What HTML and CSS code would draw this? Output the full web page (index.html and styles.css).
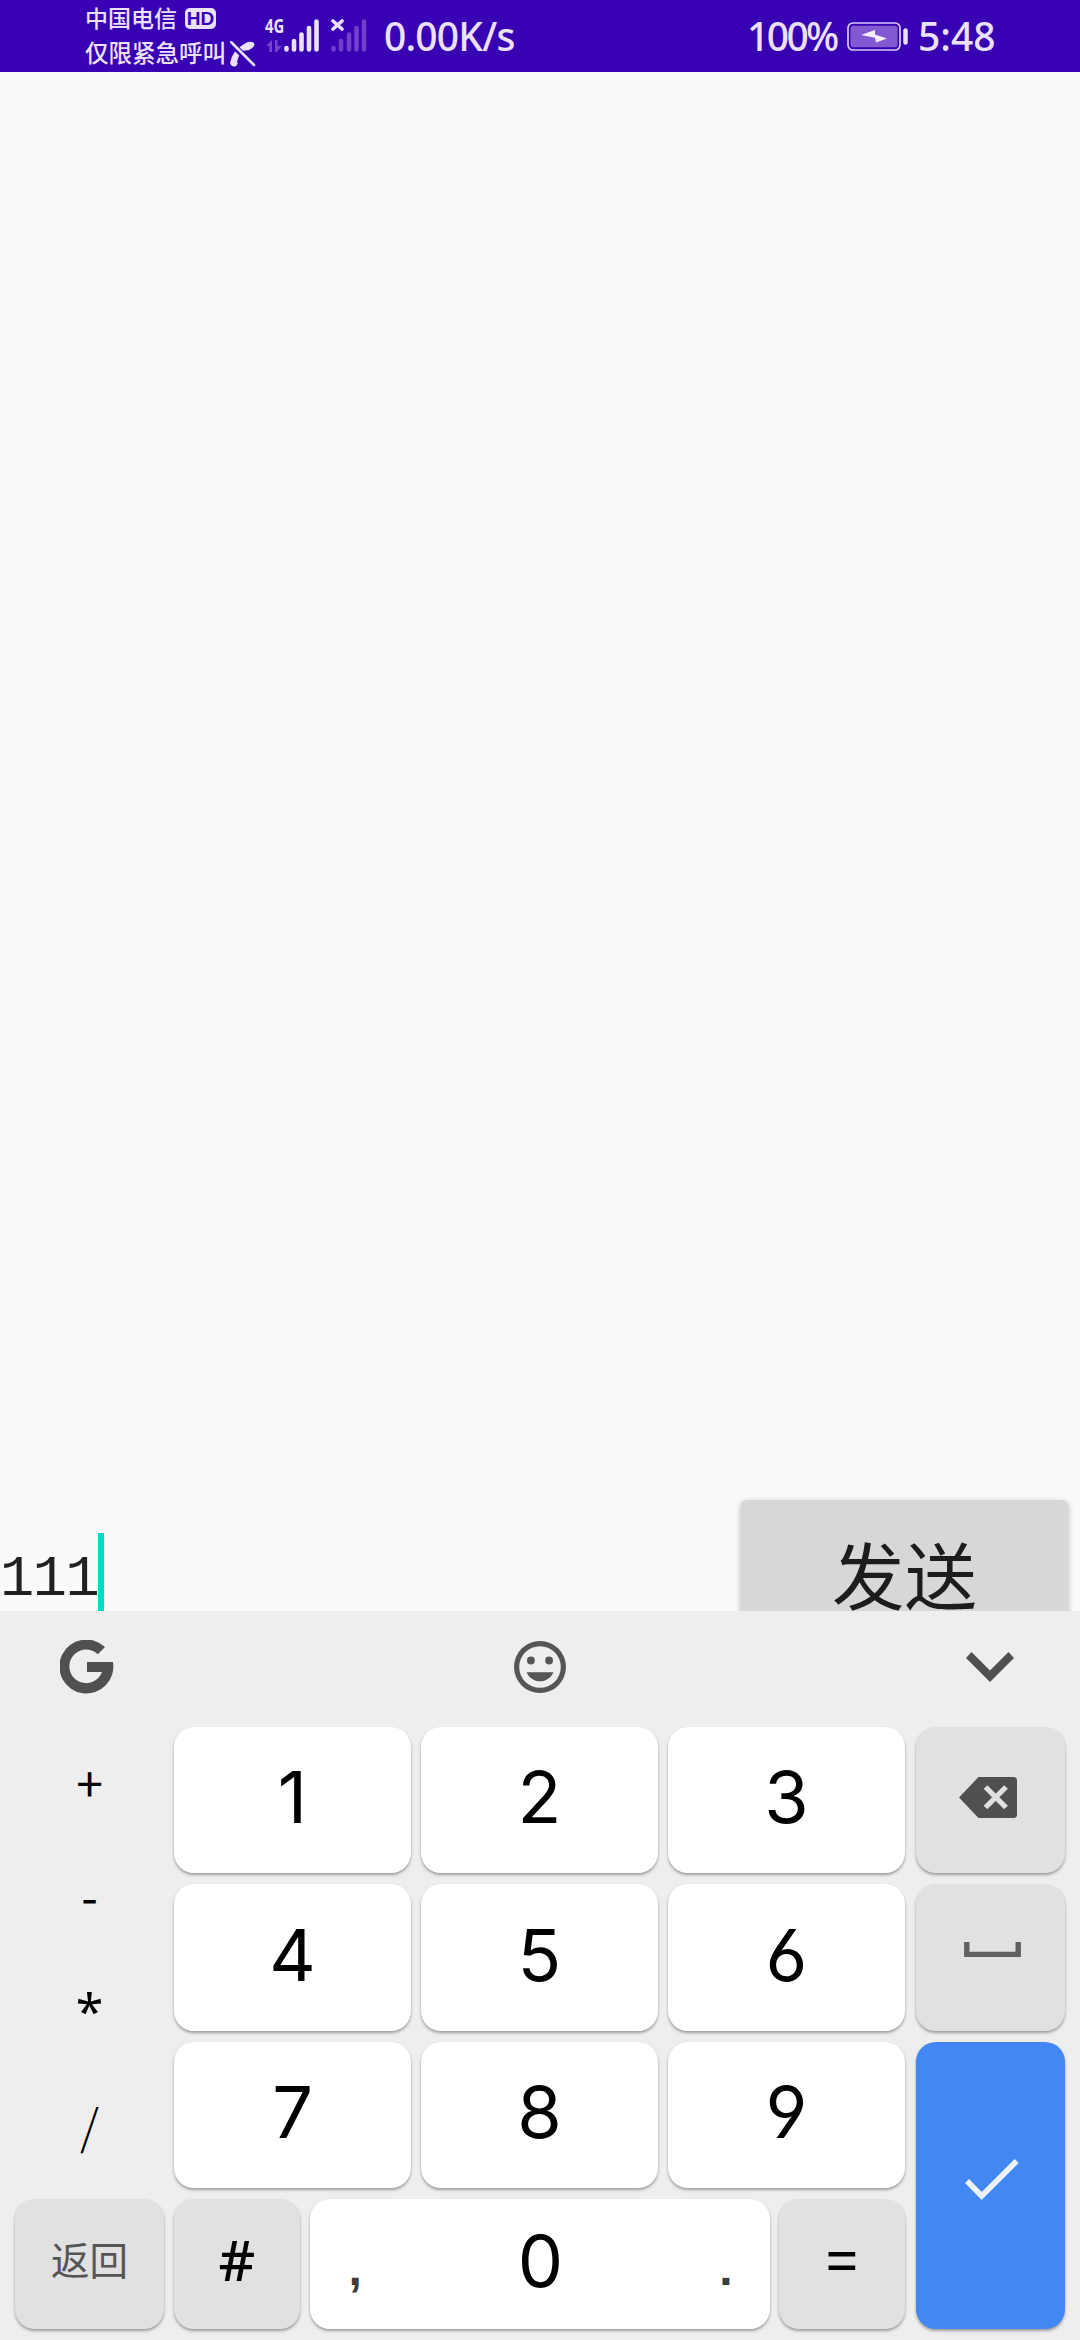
FILE: index.html
```html
<!DOCTYPE html>
<html lang="zh-CN">
<head>
<meta charset="utf-8">
<title>发送</title>
<link rel="stylesheet" href="styles.css">
</head>
<body>
<header class="status">
  <div class="carriers">
    <div class="carrier">中国电信<span class="hd">HD</span></div>
    <div class="carrier carrier-second">仅限紧急呼叫<svg class="nocall" width="26" height="26" viewBox="0 0 26 26"><path d="M7 21Q9 13 12 10L19 9Q26 5 24 2Q20-1 14 3Q2 10 0 22Q2 27 6 25Q9 22 7 21Z" fill="#ebe1fb"/><path d="M1 2L24 25" stroke="#3700b3" stroke-width="6"/><path d="M1 1L24 24" stroke="#ebe1fb" stroke-width="2.6" stroke-linecap="round"/></svg></div>
  </div>
  <div class="mobile">
    <span class="net">4G</span>
    <svg class="signal" width="54" height="34" viewBox="0 0 54 34">
      <path d="M0 27L6 21V33H3.500V27ZM9 21H11.500V27H16L10.500 33H9Z" fill="#7545cc"/>
      <g stroke="#ebe1fb" stroke-width="4.600" stroke-linecap="round"><path d="M20.500 29V30.500M28 22V30.500M35.500 15.500V30.500M43 9V30.500M50.500 2.500V30.500"/></g>
    </svg>
  </div>
  <svg class="signal-off" width="36" height="34" viewBox="0 0 36 34">
    <g stroke="#6f40ca" stroke-width="4.600" stroke-linecap="round"><path d="M2.500 29V30.500M10 22V30.500M18 15.500V30.500M25.500 9V30.500M33 2.500V30.500"/></g>
    <path d="M2 2L11 10M11 2L2 10" stroke="#ebe1fb" stroke-width="3.600" stroke-linecap="round"/>
  </svg>
  <span class="speed">0.00K/s</span>
  <span class="percent">100%</span>
  <svg class="battery" width="62" height="30" viewBox="0 0 62 30">
    <rect x="1" y="1" width="52" height="27" rx="5" fill="none" stroke="#d9c8f5" stroke-width="1.700"/>
    <rect x="3.500" y="3.800" width="47" height="21.500" rx="2.500" fill="#8358d0"/>
    <path d="M14 13L28 8V12.500L40 16.500L29 20.500L28 15.800Z" fill="#f4eefe"/>
    <path d="M58.500 8.500V20.500" stroke="#ebe1fb" stroke-width="4.500" stroke-linecap="round"/>
  </svg>
  <span class="clock">5:48</span>
</header>

<main class="chat">
  <div class="composer">
    <div class="input">111<span class="caret"></span></div>
    <div class="send">发送</div>
  </div>
</main>

<section class="keyboard">
  <div class="toolbar">
    <svg width="54" height="54" viewBox="-27 -27 54 54"><path d="M18-20A27 27 0 1 0 26-5H0V5H15A16.800 16.800 0 1 1 10.800-12.800Z" fill="#505050"/></svg>
    <svg width="52" height="52" viewBox="2 2 20 20" fill="#555"><path d="M12 2a10 10 0 1 0 0 20a10 10 0 0 0 0-20zm0 18a8 8 0 1 1 0-16a8 8 0 0 1 0 16z"/><circle cx="8.500" cy="9.500" r="1.500"/><circle cx="15.500" cy="9.500" r="1.500"/><path d="M12 17.500c2.330 0 4.310-1.460 5.110-3.500H6.890c.8 2.040 2.780 3.500 5.110 3.500z"/></svg>
    <svg class="chevron" width="48" height="30" viewBox="0 0 48 30"><path d="M0 6L5.500 0L24 18.500L42.500 0L48 6L24 30Z" fill="#505050"/></svg>
  </div>
  <div class="pad">
    <div class="side">
      <div class="symbols"><span>+</span><span class="minus">-</span><span class="star">*</span><span class="slash">/</span></div>
      <div class="key soft back">返回</div>
    </div>
    <div class="digits">
      <div class="line"><div class="key">1</div><div class="key">2</div><div class="key">3</div></div>
      <div class="line"><div class="key">4</div><div class="key">5</div><div class="key">6</div></div>
      <div class="line"><div class="key">7</div><div class="key">8</div><div class="key">9</div></div>
      <div class="line last">
        <div class="key soft hash">#</div>
        <div class="key zero"><span class="mark">,</span><span>0</span><span class="mark">.</span></div>
        <div class="key soft equals">=</div>
      </div>
    </div>
    <div class="actions">
      <div class="key soft"><svg class="delete" width="58" height="41" viewBox="0 0 58 41"><path d="M0 20.500L19.500 0H54.500Q58 0 58 3.500V37.500Q58 41 54.500 41H19.500Z" fill="#505050"/><path d="M26.500 10L47 30.500M47 10L26.500 30.500" stroke="#e1e1e1" stroke-width="5.300"/></svg></div>
      <div class="key soft"><svg class="space" width="57" height="15" viewBox="0 0 57 15"><path d="M2.800 0V12.400H54.200V0" fill="none" stroke="#606060" stroke-width="5.400"/></svg></div>
      <div class="key enter"><svg width="54" height="42" viewBox="0 0 54 42"><path d="M2 22L16.700 37L51.700 2" fill="none" stroke="#ebf2fe" stroke-width="5.700"/></svg></div>
    </div>
  </div>
</section>
</body>
</html>
```

FILE: styles.css
```css
* { box-sizing: border-box; }
body {
  margin: 0;
  width: 1080px;
  height: 2340px;
  overflow: hidden;
  display: flex;
  flex-direction: column;
  background: #fafafa;
  font-family: "Noto Sans", "Noto Sans CJK SC", sans-serif;
}
svg { display: block; flex: none; }

.status {
  flex: none;
  height: 72px;
  padding-left: 85px;
  display: flex;
  align-items: flex-start;
  background: #3700b3;
  color: #ebe1fb;
  white-space: nowrap;
}
.carriers { width: 180px; }
.carrier {
  display: flex;
  align-items: center;
  height: 35px;
  font: 500 23px/35px "Noto Sans CJK SC", sans-serif;
}
.carrier-second { font-size: 23.5px; }
.hd {
  width: 31px;
  height: 21px;
  margin: 1px 0 0 8px;
  border-radius: 5px;
  background: #ebe1fb;
  color: #3700b3;
  font: 700 19px/21px "Liberation Sans", sans-serif;
  text-align: center;
}
.nocall { margin: 2px 0 0 4px; }
.mobile { width: 66px; padding-top: 17px; }
.net {
  display: block;
  height: 19px;
  font: 700 19px/19px "Noto Sans", sans-serif;
  transform: scaleX(.78);
  transform-origin: left;
}
.signal { margin: -17px 0 0 1px; }
.signal-off { margin: 19px 17px 0 0; }
.speed, .percent, .clock {
  font: 500 39px/72px "Noto Sans", sans-serif;
}
.speed { width: 363px; letter-spacing: -.8px; }
.percent { width: 100px; letter-spacing: -2.6px; }
.clock { letter-spacing: 0; }
.battery { margin: 22px 9px 0 0; }

.chat {
  flex: none;
  height: 1539px;
  display: flex;
  flex-direction: column;
  justify-content: flex-end;
  overflow: hidden;
}
.composer {
  height: 111px;
  display: flex;
  justify-content: space-between;
  padding-right: 12px;
}
.input {
  display: flex;
  height: 111px;
  padding-top: 33px;
  color: #212121;
  font: 57px/95px "Liberation Mono", monospace;
  letter-spacing: -1.4px;
}
.caret { width: 6px; height: 78px; background: #03dac5; }
.send {
  width: 327px;
  height: 150px;
  border-radius: 6px;
  background: #d6d8d7;
  box-shadow: 0 2px 6px rgba(0, 0, 0, .28);
  color: #1c1c1c;
  font: 72.500px/145px "Noto Sans CJK SC", sans-serif;
  text-align: center;
}

.keyboard {
  flex: 1;
  padding: 0 15px;
  background: #eee;
}
.toolbar {
  height: 116px;
  padding: 0 51px 4px 45px;
  display: flex;
  align-items: center;
  justify-content: space-between;
}
.pad { display: flex; height: 602px; }
.side { width: 149px; margin-right: 10px; display: flex; flex-direction: column; gap: 11px; }
.symbols {
  height: 461px;
  display: grid;
  grid-template-rows: repeat(4, 115.25px);
  text-align: center;
  font: 48px/108px "Noto Sans CJK SC", sans-serif;
  color: #000;
}
.minus { line-height: 104px; }
.star { font: 50px/106px "Noto Sans", sans-serif; }
.slash { font-weight: 300; line-height: 102px; }
.digits { width: 731px; margin-right: 11px; display: grid; grid-template-rows: 146px 147px 146px 130px; gap: 11px; }
.line { display: grid; grid-template-columns: repeat(3, 237px); gap: 10px; }
.last { grid-template-columns: 126px 460px 126px; gap: 10px 9.5px; }
.actions { width: 149px; display: grid; grid-template-rows: 146px 147px 287px; gap: 11px; }
.key {
  display: flex;
  align-items: center;
  justify-content: center;
  border-radius: 20px;
  background: #fff;
  box-shadow: 0 2px 3px rgba(0, 0, 0, .34);
  color: #000;
  font: 72px/1 Inter, sans-serif;
  font-feature-settings: "cv03", "cv04";
  padding-bottom: 6px;
}
.soft { background: #e1e1e1; }
.back { height: 130px; padding-bottom: 12px; color: #555; font: 38.500px/1 "Noto Sans CJK SC", sans-serif; }
.hash { padding-bottom: 10px; font: 500 57px/1 "Noto Sans", sans-serif; }
.equals { padding-bottom: 12px; font: 500 54px/1 "Noto Sans CJK SC", sans-serif; }
.zero { justify-content: space-between; padding: 0 37px 6px 39px; }
.mark { color: #3c3c3c; font: 700 48px/1 "Liberation Sans", sans-serif; padding-top: 15px; }
.delete { margin: 0 6px 0 0; }
.space { margin: 0 0 10px 4px; }
.enter { background: #4287f4; padding: 0 0 11px 3px; }
```
